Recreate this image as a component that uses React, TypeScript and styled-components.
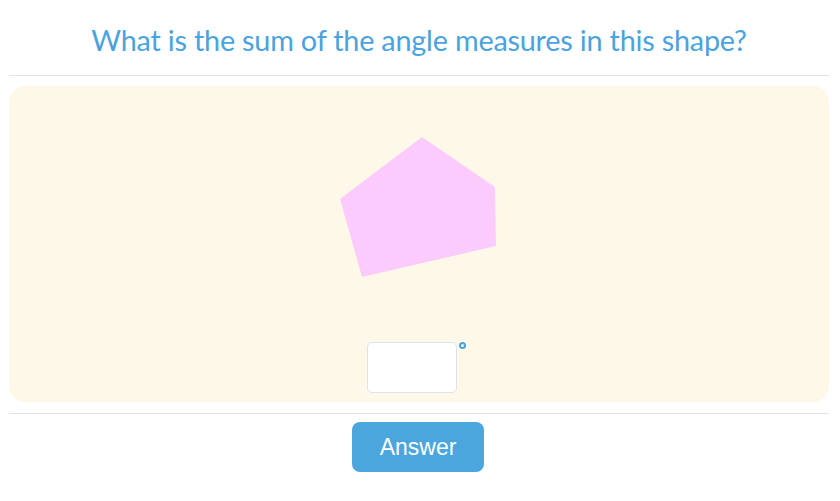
import React from 'react';
import styled, { createGlobalStyle } from 'styled-components';

const GlobalStyle = createGlobalStyle`
  html, body {
    margin: 0;
    padding: 0;
    background: #ffffff;
  }
`;

const points = [
  [84, 3],
  [157, 53],
  [158, 112],
  [24, 143],
  [2, 65],
];

const App = () => {
  return (
    <Page>
      <GlobalStyle />
      <Header>
        <Title>What is the sum of the angle measures in this shape?</Title>
      </Header>
      <Panel>
        <Figure width="160" height="146" viewBox="0 0 160 146">
          <polygon points={points.map((p) => p.join(',')).join(' ')} fill="#fccbfe" />
        </Figure>
        <AnswerRow>
          <AnswerInput type="text" />
          <Degree />
        </AnswerRow>
      </Panel>
      <Footer>
        <AnswerButton>Answer</AnswerButton>
      </Footer>
    </Page>
  );
};

const Page = styled.div`
  padding: 0 11px 0 9px;
  display: flex;
  flex-direction: column;
`;

const Header = styled.div`
  height: 75px;
  display: flex;
  align-items: center;
  justify-content: center;
  border-bottom: 1px solid #e3e3e3;
  margin-bottom: 10px;
`;

const Title = styled.h1`
  margin: 0;
  padding-top: 5px;
  font-family: Lato, 'Noto Sans', sans-serif;
  font-weight: 400;
  font-size: 28.8px;
  color: #4aa3df;
  letter-spacing: -0.2px;
`;

const Panel = styled.div`
  background: #fef8e8;
  border-radius: 16px;
  height: 316px;
  box-sizing: border-box;
  padding-top: 48px;
  display: flex;
  flex-direction: column;
  align-items: center;
`;

const Figure = styled.svg`
  display: block;
  margin-left: -2px;
`;

const AnswerRow = styled.div`
  margin-top: 62px;
  display: flex;
  align-items: flex-start;
  gap: 2px;
  margin-left: -6px;
`;

const AnswerInput = styled.input`
  width: 90px;
  height: 51px;
  box-sizing: border-box;
  border: 1px solid #dde3e8;
  border-radius: 5px;
  background: #ffffff;
  outline: none;
`;

const Degree = styled.span`
  width: 7px;
  height: 7px;
  box-sizing: border-box;
  border: 2px solid #4aa3df;
  border-radius: 50%;
`;

const Footer = styled.div`
  margin-top: 11px;
  border-top: 1px solid #e3e3e3;
  padding-top: 8px;
  display: flex;
  justify-content: center;
`;

const AnswerButton = styled.button`
  width: 132px;
  height: 50px;
  border: none;
  border-radius: 8px;
  background: #4aa6dd;
  color: #ffffff;
  font-family: 'Liberation Sans', Arial, sans-serif;
  font-size: 23px;
  cursor: pointer;
  margin-left: -2px;
`;

export default App;
